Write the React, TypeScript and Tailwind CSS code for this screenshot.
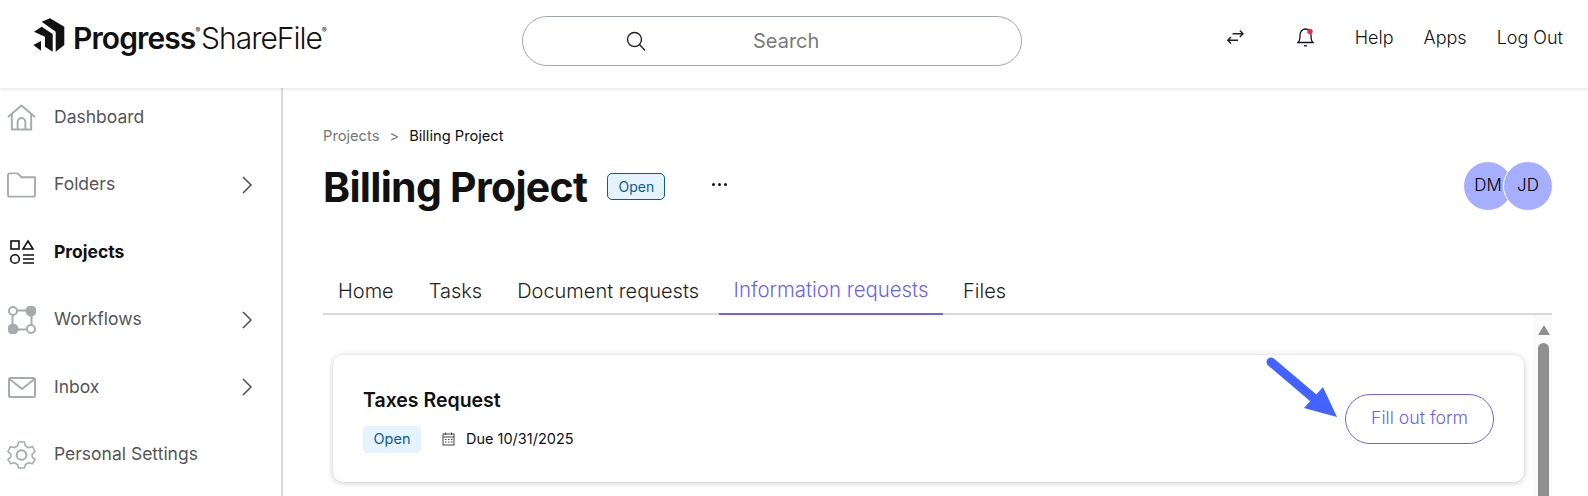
import React from "react";

// ─── Icons ────────────────────────────────────────────────────────────────────

const LogoMark = () => (
  <svg width="33" height="35" viewBox="0 0 33 35" className="shrink-0">
    <path d="M8.7 3.7 L17 0.3 L31.3 8.7 V27 L22.7 33.7 V13.7 Z" fill="#111" />
    <path d="M1 13.7 L8.7 8.7 L19.7 16 V33.7 L12 28.7 V18.7 Z" fill="#111" />
    <path d="M0.3 27 L8 23 V32.7 Z" fill="#111" />
  </svg>
);

const HomeIcon = () => (
  <svg width="30" height="28" viewBox="0 0 30 28" fill="none" stroke="#a7abae" strokeWidth="2">
    <path d="M1 14 L15 2 L29 14" strokeLinejoin="round" />
    <path d="M5 11 V27 H25 V11" />
    <path d="M11 27 V19 A4 4 0 0 1 19 19 V27" />
  </svg>
);

const FolderIcon = () => (
  <svg width="30" height="26" viewBox="0 0 30 26" fill="none" stroke="#a7abae" strokeWidth="2">
    <path d="M1 3 A2 2 0 0 1 3 1 H11 L15 5 H29 V23 A2 2 0 0 1 27 25 H3 A2 2 0 0 1 1 23 Z" strokeLinejoin="round" />
  </svg>
);

const ProjectsIcon = () => (
  <svg width="26" height="26" viewBox="0 0 26 26" fill="none" stroke="#111" strokeWidth="1.6">
    <rect x="2" y="2" width="8" height="8" />
    <path d="M19 2 L24 10 H14 Z" />
    <circle cx="6" cy="20" r="4.3" />
    <path d="M14 16 H25 M14 20 H25 M14 24 H25" />
  </svg>
);

const WorkflowIcon = () => (
  <svg width="28" height="28" viewBox="0 0 28 28" fill="none" stroke="#a7abae" strokeWidth="2">
    <path d="M9 4.5 H18 M23.5 10 V18 M18 23.5 H9 M4.5 18 V10" />
    <circle cx="5" cy="5" r="4" />
    <circle cx="23" cy="5" r="4.5" fill="#a7abae" />
    <circle cx="5" cy="23" r="4.5" fill="#a7abae" />
    <circle cx="23" cy="23" r="4" />
  </svg>
);

const MailIcon = () => (
  <svg width="28" height="21" viewBox="0 0 28 21" fill="none" stroke="#a7abae" strokeWidth="2">
    <rect x="1" y="1" width="26" height="19" rx="1.5" />
    <path d="M1.5 2 L14 12 L26.5 2" />
  </svg>
);

const GearIcon = () => (
  <svg width="30" height="30" viewBox="0 0 30 30" fill="none" stroke="#a7abae" strokeWidth="1.6">
    <circle cx="15" cy="15" r="5" strokeWidth="2" />
    <path d="M12 1.5 H18 L19 5.5 L22.5 7.5 L26.5 6.3 L29 11.5 L26 14 V17 L29 19.5 L26.5 24 L22.5 23 L19 25 L18 28.5 H12 L11 25 L7.5 23 L3.5 24 L1 19.5 L4 17 V14 L1 11.5 L3.5 6.3 L7.5 7.5 L11 5.5 Z" strokeLinejoin="round" />
  </svg>
);

const Chevron = () => (
  <svg width="10" height="18" viewBox="0 0 10 18" fill="none" stroke="#4a4a4a" strokeWidth="1.5" className="shrink-0">
    <path d="M1 1 L9 9 L1 17" />
  </svg>
);

const SearchIcon = () => (
  <svg width="20" height="20" viewBox="0 0 20 20" fill="none" stroke="#222" strokeWidth="1.4">
    <circle cx="8.5" cy="8.5" r="7" />
    <path d="M13.5 13.5 L19 19.5" />
  </svg>
);

const SwapIcon = () => (
  <svg width="17" height="14" viewBox="0 0 17 14" fill="none" stroke="#222" strokeWidth="1.4">
    <path d="M5.5 3.7 H16 M12.8 0.5 L16 3.7 L12.8 6.9" />
    <path d="M11 10.3 H0.8 M4 7.1 L0.8 10.3 L4 13.5" />
  </svg>
);

const BellIcon = () => (
  <svg width="17" height="19" viewBox="0 0 17 19" fill="none" stroke="#111" strokeWidth="1.3">
    <path d="M1 14.5 C3 13 3 10 3 7 C3 3.5 5.5 1 8.5 1 C11.5 1 14 3.5 14 7 C14 10 14 13 16 14.5 Z" />
    <path d="M7 17.8 H10" />
    <circle cx="13" cy="3.5" r="2.7" fill="#e5343a" stroke="none" />
  </svg>
);

const CalendarIcon = () => (
  <svg width="13" height="14" viewBox="0 0 13 14" fill="none" stroke="#444" strokeWidth="1">
    <rect x="1" y="2" width="11" height="11" />
    <path d="M1 5 H12 M3.5 0.5 V3 M9.5 0.5 V3" />
    <path d="M3 7.5 H4.5 M6 7.5 H7.5 M9 7.5 H10.5 M3 10 H4.5 M6 10 H7.5 M9 10 H10.5" />
  </svg>
);

// ─── Sidebar ──────────────────────────────────────────────────────────────────

const navItems = [
  { label: "Dashboard", icon: <HomeIcon /> },
  { label: "Folders", icon: <FolderIcon />, more: true },
  { label: "Projects", icon: <ProjectsIcon />, active: true },
  { label: "Workflows", icon: <WorkflowIcon />, more: true },
  { label: "Inbox", icon: <MailIcon />, more: true },
  { label: "Personal Settings", icon: <GearIcon /> },
];

const Sidebar = () => (
  <aside className="w-[283px] shrink-0 border-r-2 border-[#d9d9d9] pt-[15px] pl-[7px] pr-[29px] flex flex-col gap-[39.5px]">
    {navItems.map((item) => (
      <div key={item.label} className="flex items-center h-[28px]">
        <span className="w-[47px] shrink-0 flex justify-center pr-[18px]">{item.icon}</span>
        <span className={item.active ? "text-[17.5px] font-bold text-[#111]" : "text-[17.5px] text-[#555]"}>
          {item.label}
        </span>
        {item.more && <span className="ml-auto flex"><Chevron /></span>}
      </div>
    ))}
  </aside>
);

// ─── Main Component ───────────────────────────────────────────────────────────

const tabs = ["Home", "Tasks", "Document requests", "Information requests", "Files"];

export default function App() {
  return (
    <div className="h-[496px] w-[1588px] overflow-hidden bg-white flex flex-col font-['Inter',sans-serif]">
      {/* Header */}
      <header className="relative z-10 h-[88px] shrink-0 flex items-center bg-white shadow-[0_1px_5px_rgba(0,0,0,0.12)] pl-[33px] pr-[25px]">
        <div className="w-[489px] shrink-0 flex items-center gap-[7px] -mt-[18px]">
          <LogoMark />
          <span className="flex items-start text-[#111] leading-none mt-[6px]">
            <span className="text-[30px] font-semibold tracking-[-0.9px]">Progress</span>
            <span className="text-[7px] mr-[1px] mt-[4px]">®</span>
            <span className="text-[30px] font-light tracking-[-1px]">ShareFile</span>
            <span className="text-[7px] mt-[4px]">®</span>
          </span>
        </div>
        <div className="w-[500px] h-[50px] shrink-0 -mt-[6px] rounded-full border border-[#a3a6a8] flex items-center pl-[103px]">
          <SearchIcon />
          <span className="ml-[107px] text-[20px] text-[#7a7a7a]">Search</span>
        </div>
        <div className="ml-auto flex items-center -mt-[14px] text-[18px] font-light text-[#111]">
          <SwapIcon />
          <span className="ml-[53px] flex"><BellIcon /></span>
          <span className="ml-[41px]">Help</span>
          <span className="ml-[30px]">Apps</span>
          <span className="ml-[30px]">Log Out</span>
        </div>
      </header>

      <div className="flex-1 flex min-h-0">
        <Sidebar />

        <main className="flex-1 min-w-0 pl-[40px] pr-[36px] pt-[38px]">
          {/* Breadcrumb */}
          <div className="flex items-center text-[14.7px] h-[20px] text-[#111]">
            <span className="text-[#777]">Projects</span>
            <span className="mx-[10px] text-[#777]">&gt;</span>
            <span>Billing Project</span>
          </div>

          {/* Title row */}
          <div className="flex items-center mt-[12px] h-[56px]">
            <h1 className="text-[41px] font-bold tracking-[-0.7px] text-[#111] leading-none mt-[3px]">Billing Project</h1>
            <span className="ml-[20px] h-[27px] w-[58px] flex items-center justify-center rounded-[5px] border border-[#0b5c93] bg-[#e5f3fd] text-[14px] text-[#0b5c93]">
              Open
            </span>
            <span className="ml-[47px] -mt-[3px] flex gap-[3px]">
              <span className="h-[3px] w-[3px] rounded-full bg-[#111]" />
              <span className="h-[3px] w-[3px] rounded-full bg-[#111]" />
              <span className="h-[3px] w-[3px] rounded-full bg-[#111]" />
            </span>
            <div className="ml-auto flex text-[17px] font-light text-black">
              <span className="h-[48px] w-[48px] rounded-full bg-[#a6aeff] flex items-center justify-center">DM</span>
              <span className="h-[50px] w-[50px] -m-[1px] -ml-[9px] rounded-full bg-[#a6aeff] border border-white flex items-center justify-center">JD</span>
            </div>
          </div>

          {/* Tabs */}
          <div className="mt-[53px] flex gap-[5px] h-[48px] border-b-2 border-[#d9d9d9]">
            {tabs.map((tab) => (
              <div
                key={tab}
                className={
                  tab === "Information requests"
                    ? "px-[14.5px] h-[48px] flex items-center text-[20.4px] font-light text-[#6a62f5] border-b-2 border-[#6a62f5]"
                    : "px-[15px] h-[48px] flex items-center text-[20px] font-light text-[#222]"
                }
              >
                {tab}
              </div>
            ))}
          </div>

          {/* Request list with scrollbar */}
          <div className="flex">
            <div className="flex-1 min-w-0 pl-[10px] pr-[9px] pt-[40px]">
              <div className="relative h-[127px] rounded-[10px] bg-white shadow-[0_1px_6px_rgba(0,0,0,0.22)] flex items-center justify-between pl-[30px] pr-[30px]">
                <div className="mt-[4px]">
                  <div className="text-[19.5px] font-semibold text-[#111] leading-[26px] -mt-[2px]">Taxes Request</div>
                  <div className="mt-[13px] flex items-center">
                    <span className="h-[27px] w-[58px] rounded-[4px] bg-[#e5f3fd] text-[#0b5c93] text-[14.5px] flex items-center justify-center">Open</span>
                    <span className="ml-[21px] flex"><CalendarIcon /></span>
                    <span className="ml-[11px] text-[14.5px] text-[#111]">Due 10/31/2025</span>
                  </div>
                </div>
                <button className="h-[50px] w-[149px] rounded-full border border-[#6a62f5] text-[#6a62f5] text-[17.7px] font-light">
                  Fill out form
                </button>
                {/* Annotation arrow */}
                <svg width="76" height="66" viewBox="0 0 76 66" className="absolute left-[932px] top-[1px]">
                  <path d="M6 6 L52 45" stroke="#4263ff" strokeWidth="9" strokeLinecap="round" fill="none" />
                  <path d="M58 31 L72 61 L39 52 Z" fill="#4263ff" />
                </svg>
              </div>
            </div>
            <div className="w-[19px] shrink-0 bg-[#fafafa] flex flex-col items-center pt-[10px] pl-[2px]">
              <span className="h-0 w-0 border-x-[6.5px] border-b-[10px] border-x-transparent border-b-[#8f8f8f]" />
              <span className="mt-[8px] h-[200px] w-[11px] rounded-full bg-[#8f8f8f]" />
            </div>
          </div>
        </main>
      </div>
    </div>
  );
}
